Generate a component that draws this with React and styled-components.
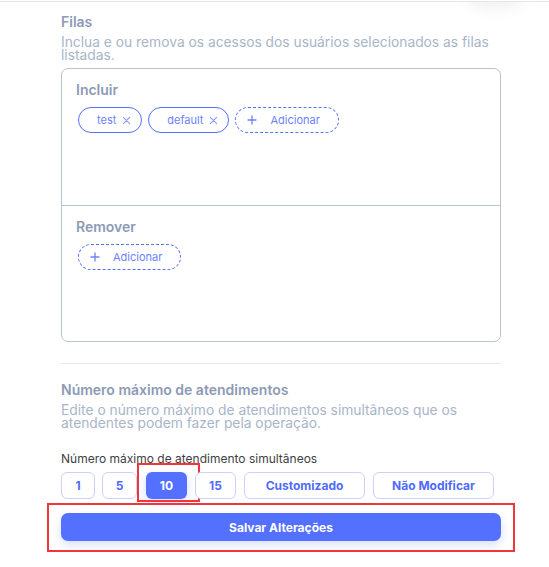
import styled, { createGlobalStyle } from 'styled-components';

const GlobalStyle = createGlobalStyle`
  body {
    margin: 0;
    background: #ffffff;
    font-family: Inter, "Noto Sans", sans-serif;
  }
`;

const Page = styled.div`
  position: relative;
  width: 549px;
  height: 567px;
  overflow: hidden;
  border-top: 1px solid #e4e6ea;
  margin-top: 1px;
  box-sizing: border-box;
  &::after {
    content: '';
    position: absolute;
    top: -14px;
    left: 465px;
    width: 60px;
    height: 22px;
    border-radius: 50%;
    background: rgba(220, 222, 228, 0.35);
    filter: blur(6px);
  }
`;

const Content = styled.div`
  width: 440px;
  margin-left: 61px;
  padding-top: 12px;
  display: flex;
  flex-direction: column;
`;

const Title = styled.div`
  font-size: 14px;
  line-height: 16px;
  font-weight: 600;
  color: #8c9bb6;
`;

const Description = styled.div`
  margin-top: 6px;
  font-size: 13.8px;
  line-height: 13px;
  color: #a9b5c9;
`;

const QueueBox = styled.div`
  margin-top: 6px;
  border: 1.5px solid #b7c3d7;
  border-radius: 7px;
  display: flex;
  flex-direction: column;
`;

const Section = styled.div`
  height: ${(p) => p.$height}px;
  box-sizing: border-box;
  padding: 13px 14px;
  border-top: ${(p) => (p.$divided ? '1.5px solid #b7c3d7' : 'none')};
`;

const SectionLabel = styled.div`
  font-size: 14px;
  line-height: 16px;
  font-weight: 600;
  color: #8c9bb6;
`;

const ChipList = styled.div`
  margin-top: 9px;
  display: flex;
  gap: 6px;
  margin-left: 2px;
`;

const Chip = styled.div`
  height: 26px;
  box-sizing: border-box;
  display: flex;
  align-items: center;
  gap: 6px;
  padding: 0 10px 0 18px;
  border: 1.5px solid #5770ff;
  border-radius: 14px;
  font-size: 11px;
  color: #6d82ff;
`;

const AddChip = styled(Chip)`
  border-style: dashed;
  gap: 13px;
  padding: 0 18px 0 11px;
`;

const Separator = styled.div`
  margin-top: 21px;
  height: 1px;
  background: #e6e8ec;
`;

const SectionTitle = styled(Title)`
  margin-top: 18px;
`;

const Label = styled.div`
  margin-top: 21px;
  font-size: 12px;
  line-height: 15px;
  color: #3d3f44;
`;

const OptionRow = styled.div`
  margin-top: 6px;
  display: flex;
  align-items: center;
`;

const Option = styled.button`
  position: relative;
  height: 27px;
  min-width: ${(p) => p.$width}px;
  margin-right: ${(p) => p.$gap}px;
  box-sizing: border-box;
  padding: 0;
  border: ${(p) => (p.$active ? 'none' : '1px solid #c9d2fb')};
  border-radius: 6px;
  background: ${(p) => (p.$active ? '#5470ff' : '#ffffff')};
  box-shadow: ${(p) => (p.$active ? '0 3px 8px rgba(84, 112, 255, 0.25)' : 'none')};
  color: ${(p) => (p.$active ? '#ffffff' : '#4f6bff')};
  font-family: Inter, sans-serif;
  font-size: 12px;
  font-weight: 700;
`;

const Highlight = styled.span`
  position: absolute;
  top: ${(p) => p.$top}px;
  left: ${(p) => p.$left}px;
  right: ${(p) => p.$right}px;
  bottom: ${(p) => p.$bottom}px;
  border: 2px solid #f2353a;
  pointer-events: none;
`;

const SaveWrap = styled.div`
  position: relative;
  margin-top: 14px;
`;

const SaveButton = styled.button`
  width: 100%;
  height: 28px;
  border: none;
  border-radius: 7px;
  background: #5470ff;
  box-shadow: 0 4px 10px rgba(84, 112, 255, 0.22);
  color: #ffffff;
  font-family: Inter, sans-serif;
  font-size: 12px;
  font-weight: 700;
`;

const CloseIcon = () => (
  <svg width="9" height="9" viewBox="0 0 10 10" fill="none" stroke="#8d9cff" strokeWidth="1.3" strokeLinecap="round">
    <path d="M1.5 1.5l7 7M8.5 1.5l-7 7" />
  </svg>
);

const PlusIcon = () => (
  <svg width="10" height="10" viewBox="0 0 10 10" fill="none" stroke="#6d82ff" strokeWidth="1.3" strokeLinecap="round">
    <path d="M5 1v8M1 5h8" />
  </svg>
);

const options = [
  { label: '1', width: 34, gap: 7 },
  { label: '5', width: 35, gap: 9 },
  { label: '10', width: 41, gap: 8, active: true },
  { label: '15', width: 41, gap: 8 },
  { label: 'Customizado', width: 121, gap: 8 },
  { label: 'Não Modificar', width: 121, gap: 0 },
];

export default function App() {
  return (
    <Page>
      <GlobalStyle />
      <Content>
        <Title>Filas</Title>
        <Description>
          Inclua e ou remova os acessos dos usuários selecionados as filas listadas.
        </Description>
        <QueueBox>
          <Section $height={136}>
            <SectionLabel>Incluir</SectionLabel>
            <ChipList>
              <Chip>
                test <CloseIcon />
              </Chip>
              <Chip>
                default <CloseIcon />
              </Chip>
              <AddChip>
                <PlusIcon /> Adicionar
              </AddChip>
            </ChipList>
          </Section>
          <Section $height={136} $divided>
            <SectionLabel>Remover</SectionLabel>
            <ChipList>
              <AddChip>
                <PlusIcon /> Adicionar
              </AddChip>
            </ChipList>
          </Section>
        </QueueBox>

        <Separator />

        <SectionTitle>Número máximo de atendimentos</SectionTitle>
        <Description>
          Edite o número máximo de atendimentos simultâneos que os atendentes podem fazer pela
          operação.
        </Description>

        <Label>Número máximo de atendimento simultâneos</Label>
        <OptionRow>
          {options.map((o) => (
            <Option key={o.label} $width={o.width} $gap={o.gap} $active={o.active}>
              {o.label}
              {o.active && <Highlight $top={-9} $left={-9} $right={-13} $bottom={-3} />}
            </Option>
          ))}
        </OptionRow>

        <SaveWrap>
          <SaveButton>Salvar Alterações</SaveButton>
          <Highlight $top={-10} $left={-14} $right={-14} $bottom={-11} />
        </SaveWrap>
      </Content>
    </Page>
  );
}
